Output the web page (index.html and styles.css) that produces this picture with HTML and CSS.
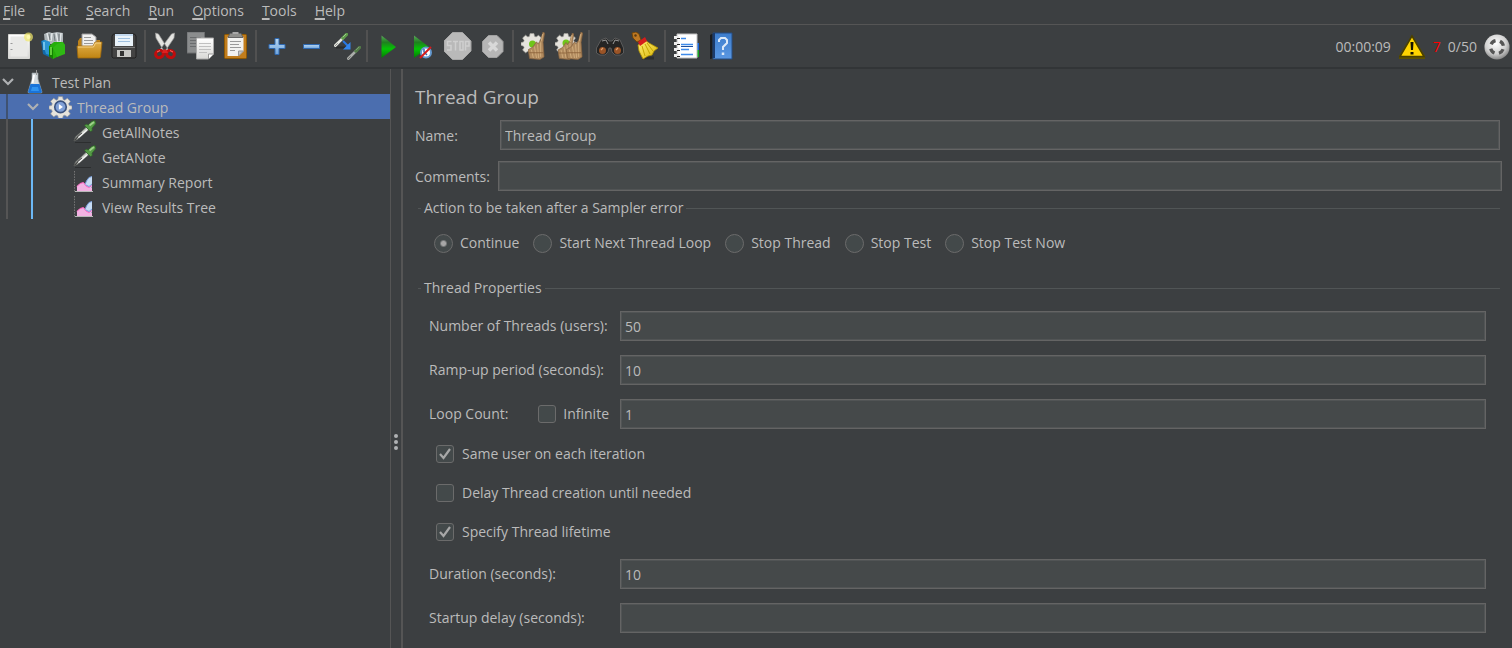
FILE: index.html
```html
<!DOCTYPE html>
<html lang="en">
<head>
<meta charset="utf-8">
<title>Thread Group</title>
<link rel="stylesheet" href="styles.css">
</head>
<body>
<svg class="defs" width="0" height="0" aria-hidden="true">
  <defs>
    <linearGradient id="paper" x1="0" y1="0" x2="0" y2="1"><stop offset="0" stop-color="#fff"/><stop offset="1" stop-color="#d8d8d6"/></linearGradient>
    <linearGradient id="folder" x1="0" y1="0" x2="0" y2="1"><stop offset="0" stop-color="#e2b04a"/><stop offset="1" stop-color="#c08412"/></linearGradient>
    <linearGradient id="green" x1="0" y1="0" x2="0" y2="1"><stop offset="0" stop-color="#5aa85a"/><stop offset=".3" stop-color="#1f7f1f"/><stop offset=".6" stop-color="#04c404"/><stop offset="1" stop-color="#057a05"/></linearGradient>
    <linearGradient id="sky" x1="0" y1="0" x2="0" y2="1"><stop offset="0" stop-color="#b9d8f3"/><stop offset="1" stop-color="#6fa4dc"/></linearGradient>
    <linearGradient id="broom" x1="0" y1="0" x2="1" y2="1"><stop offset="0" stop-color="#fff07a"/><stop offset="1" stop-color="#d9b400"/></linearGradient>
    <linearGradient id="book" x1="0" y1="0" x2="0" y2="1"><stop offset="0" stop-color="#3d7dcc"/><stop offset="1" stop-color="#5a97e2"/></linearGradient>
    <radialGradient id="ball" cx=".45" cy=".35" r=".7"><stop offset="0" stop-color="#fff"/><stop offset=".6" stop-color="#d0d0d0"/><stop offset="1" stop-color="#777"/></radialGradient>
    <symbol id="pipette" viewBox="0 0 24 24">
      <path d="M2 22.500h16" stroke="#2c2e2f" stroke-width="1"/>
      <path d="M1 21l1.500-4L13.500 7l2.500 2.500L5 19z" fill="#c9cdc6" stroke="#666a64" stroke-width=".8"/>
      <path d="M1.500 20.500l3.500-4 4-3.500" stroke="#444" stroke-width="1.200" fill="none"/>
      <path d="M5.500 17.500L14 10" stroke="#f4f4f4" stroke-width="1.300"/>
      <path d="M11.500 5.500l1.800-1.300 2 .8 3.200-3.500 3.500-1 .7 3.200-3.700 4.500.3 2.300-1.800 1z" fill="#549a45" stroke="#2c6426" stroke-width=".7"/>
      <path d="M16.500 5.500L21 2" stroke="#9fd18b" stroke-width="1.800"/>
    </symbol>
    <symbol id="dropper" viewBox="0 0 15 15">
      <path d="M1.500 13.500L9.500 5.500" stroke="#e6e8e2" stroke-width="3" stroke-linecap="round"/>
      <path d="M1 14l3-3" stroke="#8b8d88" stroke-width="1"/>
      <path d="M9.500 5.500l4-4" stroke="#5f9c4b" stroke-width="3.500" stroke-linecap="round"/>
      <path d="M9.500 4.500l3.500-3.500" stroke="#a4cf92" stroke-width="1"/>
    </symbol>
    <symbol id="chart" viewBox="0 0 24 24">
      <path d="M1.500 1v20.500" stroke="#777" stroke-width="1" fill="none" stroke-dasharray="1.500 1.200"/>
      <path d="M2 21.500h18" stroke="#b8b8b8"/>
      <path d="M4 21v-5l3-2.500 3-1 3 2 3 2 3 1v3.500z" fill="#f2b2e2"/>
      <path d="M12 15l1.500-4L16 7.500l3-1V17l-2 1-3-2z" fill="#c6dcf5"/>
      <path d="M4 16.500L7 13.500l3.500-1 2.500 3.500 3 1.500 3-2" stroke="#ff5fc0" fill="none"/>
      <path d="M12 14.500l1.500-3.500L16 7.500l3-1M13 15l3 1.500 3-2.500" stroke="#7a9fdc" fill="none"/>
    </symbol>
    <symbol id="gear" viewBox="0 0 28 28">
      <path d="M11.500 2h5l.7 3.500 2 .8L22.300 4 26 7.700l-2.200 3 .8 2 3.400.8v3.500l-3.400 1-.8 2 2.200 3-3.700 3.500-3-2-2 .9-.8 3.100h-5l-.7-3.100-2-.9-3 2L2 23l2-3-.8-2L0 17v-3.500l3.200-.8.8-2-2-3L5.800 4l3 2.300 2-.8z" fill="#e5e3dd" stroke="#a09e99" stroke-width=".8"/>
    </symbol>
    <symbol id="brush" viewBox="0 0 16 27">
      <path d="M14.300 0l1.500 1-1.500 9 1 14-4 2.500-10-1L0 17l4.500-2.500L8 9.500l1.500 2L12 8z" fill="#b08a5f" stroke="#86633f" stroke-width=".7"/>
      <path d="M3 17l2 8M6 14l2 11M9 12l1 13M12 10v14M14 2l-1.500 7" stroke="#d3ae7e" stroke-width=".9" fill="none"/>
      <path d="M1 20h13.500" stroke="#8a6037" stroke-width=".8"/>
    </symbol>
  </defs>
</svg>

<div class="app">
  <nav class="menubar" aria-label="Main menu">
    <button class="menu"><u>F</u>ile</button>
    <button class="menu"><u>E</u>dit</button>
    <button class="menu"><u>S</u>earch</button>
    <button class="menu"><u>R</u>un</button>
    <button class="menu"><u>O</u>ptions</button>
    <button class="menu"><u>T</u>ools</button>
    <button class="menu"><u>H</u>elp</button>
  </nav>

  <header class="toolbar">
    <div class="group">
      <button class="tool" aria-label="New"><svg width="28" height="28" viewBox="0 0 28 28"><path d="M2.500 2.500h21v24h-21z" fill="url(#paper)" stroke="#d8d8d5"/><path d="M4.500 4.500h17v20h-17z" fill="#e9e9e7"/><path d="M4.500 11.500h2M4.500 17.500h2" stroke="#999"/><circle cx="22.500" cy="5" r="4.500" fill="#f1e86a" opacity=".7"/><circle cx="22.500" cy="5" r="2" fill="#fffbb0"/></svg></button>
      <button class="tool" aria-label="Templates"><svg width="28" height="28" viewBox="0 0 28 28"><path d="M3 2l5-2 3 1 5-1 6 1v11H4z" fill="#aeb5b8"/><path d="M6 1l2 8M11 1l-1 8M15 1l2 9M20 1l-1 9" stroke="#e2e6e8" stroke-width="1.500"/><path d="M8 2l1 6M13 2l1 7M18 2v7" stroke="#70777a"/><path d="M0 9l3-1 5 2v15l-6-3z" fill="#1269a8"/><path d="M1 9l3-1 5 2v13l-4-1z" fill="#2a94d2"/><path d="M3 10v8" stroke="#8ed5f4" stroke-width="1.500"/><path d="M8 14l5-4h8l3 3v8l-12 6-4-3z" fill="#26ae0a"/><path d="M8 14l4 2v11l-4-3z" fill="#148003"/><path d="M12 16l4-4 6-2 2 3v9l-8 3z" fill="#2fb914"/><path d="M10 15v8" stroke="#7ae84c" stroke-width="1.500"/></svg></button>
      <button class="tool" aria-label="Open"><svg width="28" height="28" viewBox="0 0 28 28"><path d="M2 9l2-3h6l2 2h12v18H2z" fill="#be821a"/><path d="M6 2h10l4 3v12H6z" fill="#f0f0f0" stroke="#999"/><path d="M8 5.500h7M8 8.500h9M8 11.500h9" stroke="#999"/><path d="M1 14h16l2-4h7l-1.500 15-1 1H2z" fill="url(#folder)" stroke="#a26b0b" stroke-width=".8"/><path d="M2 15h15.500l2-4h5.500" stroke="#f6d288" fill="none"/></svg></button>
      <button class="tool" aria-label="Save"><svg width="28" height="28" viewBox="0 0 28 28"><path d="M1 4l1.500-2h21L25 4v21l-1 1H2l-1-1z" fill="#434343" stroke="#202020"/><path d="M4 2h18v12H4z" fill="#eaf3fa"/><path d="M4 2h18v2H4z" fill="#c2d8ee"/><path d="M7 6.500h12M7 9.500h12" stroke="#9fc0e0"/><path d="M2 15.500h22" stroke="#777"/><path d="M6 18h14v7H6z" fill="#c8c8c5"/><path d="M9 19h4v5H9z" fill="#333"/></svg></button>
    </div>
    <div class="separator"></div>
    <div class="group">
      <button class="tool" aria-label="Cut"><svg width="28" height="28" viewBox="0 0 28 28"><path d="M3.500 1l3 1 10 16-4 2L4 6zM22.500 1l-3 1L8.500 17l4 3L22 6z" fill="#e4e4e1" stroke="#999" stroke-width=".7"/><g fill="none" stroke="#c00c0c" stroke-width="3"><ellipse cx="7.500" cy="22" rx="4" ry="3.500" transform="rotate(-25 7.500 22)"/><ellipse cx="18.500" cy="22" rx="4" ry="3.500" transform="rotate(25 18.500 22)"/></g><path d="M11 18.500l2-1.500 2 1.500 1 2.500h-6z" fill="#dd2020"/><path d="M5 20l3-1.500M18 18.500l3 1.500" stroke="#ff6a61"/></svg></button>
      <button class="tool" aria-label="Copy"><svg width="28" height="28" viewBox="0 0 28 28"><path d="M0 0h17.500v21H0z" fill="#8b8d8e" stroke="#6c6e70"/><path d="M3 5.500h11M3 8.500h11M3 11.500h7M3 14.500h6" stroke="#6a6c6e"/><path d="M9.500 6h17v16l-5 5h-12z" fill="url(#paper)" stroke="#aaa"/><path d="M12 11.500h12M12 14.500h12M12 17.500h12M12 20.500h8" stroke="#c0c0c0"/><path d="M21.500 27v-5h5" fill="#fff" stroke="#999"/></svg></button>
      <button class="tool" aria-label="Paste"><svg width="28" height="28" viewBox="0 0 28 28"><rect x="2.500" y="2.500" width="22" height="24" rx="1" fill="#c17d1d" stroke="#8f5902"/><path d="M5.500 5h16v14l-5 5h-11z" fill="#f2f2f0"/><path d="M8 1.500h11l2 4H6z" fill="#8f8f8c" stroke="#666"/><path d="M10.500 0h6v2h-6z" fill="#a8a8a8"/><path d="M8 9.500h11M8 12.500h9M8 15.500h11M8 18.500h5" stroke="#999"/><path d="M16.500 24v-5h5z" fill="#c9c9c5" stroke="#999"/></svg></button>
    </div>
    <div class="separator"></div>
    <div class="group">
      <button class="tool" aria-label="Expand all"><svg width="28" height="28" viewBox="0 0 28 28"><path d="M12 6.500h4v6h6v4h-6v6h-4v-6H6v-4h6z" fill="url(#sky)" stroke="#2e68b0"/></svg></button>
      <button class="tool" aria-label="Collapse all"><svg width="28" height="28" viewBox="0 0 28 28"><path d="M5.500 12.500h16v4h-16z" fill="url(#sky)" stroke="#2e68b0"/></svg></button>
      <button class="tool" aria-label="Toggle"><svg width="28" height="28" viewBox="0 0 28 28"><path d="M3 15.500h11" stroke="#2a2c2d" stroke-width="2"/><use href="#dropper" x="1" y="1" width="14" height="14"/><path d="M10 9l5 5" stroke="#2878e4" stroke-width="2"/><path d="M17.500 10v7.500H10z" fill="#3487ee"/><g opacity=".65"><use href="#dropper" x="14" y="14" width="14" height="14"/></g></svg></button>
    </div>
    <div class="separator"></div>
    <div class="group">
      <button class="tool" aria-label="Start"><svg width="28" height="28" viewBox="0 0 28 28"><path d="M7.500 3.500L22 15 7.500 26z" fill="url(#green)"/></svg></button>
      <button class="tool" aria-label="Start no pauses"><svg width="28" height="28" viewBox="0 0 28 28"><path d="M5 3.500L20 15 5 26z" fill="url(#green)"/><circle cx="17" cy="20.500" r="5" fill="#fff" stroke="#6499d0" stroke-width="2"/><path d="M15 17v3l3 3" stroke="#3269b0" stroke-width="1.500" fill="none"/><path d="M11 26l11-11" stroke="#d61b1b" stroke-width="2"/></svg></button>
      <button class="tool" aria-label="Stop"><svg width="28" height="28" viewBox="0 0 28 28"><path d="M8.500 .5h10L27 9v10l-8.500 8.500h-10L0 19V9z" fill="#b9b9b9" stroke="#a6a6a6"/><g stroke="#cfcfcf" fill="none" stroke-width="1.500"><path d="M7.500 9.500H3.500v4h3.500V18H3M9 9.500h5M11.500 9.500v9M16 9.500h3V18h-3zM21.500 18.500v-9H25V14h-3.500"/></g></svg></button>
      <button class="tool" aria-label="Shutdown"><svg width="28" height="28" viewBox="0 0 28 28"><path d="M9.500 3.500h8.500l6 6v10l-6 6H9.500l-6-6v-10z" fill="#b6b6b6" stroke="#a0a0a0"/><path d="M10 10.500l8 8M18 10.500l-8 8" stroke="#d8d8d8" stroke-width="3.500"/></svg></button>
    </div>
    <div class="separator"></div>
    <div class="group">
      <button class="tool" aria-label="Clear"><svg width="28" height="28" viewBox="0 0 28 28"><use href="#gear" x="1" y="0" width="22" height="22"/><circle cx="12.500" cy="12" r="3.500" fill="#70c51b"/><use href="#brush" x="8" y="0" width="17" height="28"/></svg></button>
      <button class="tool" aria-label="Clear all"><svg width="28" height="28" viewBox="0 0 28 28"><use href="#gear" x="0" y="0" width="22" height="22"/><circle cx="11" cy="11" r="3.500" fill="#70c51b"/><use href="#brush" x="3" y="1" width="16" height="27"/><use href="#brush" x="11" y="0" width="17" height="28"/></svg></button>
    </div>
    <div class="separator"></div>
    <div class="group">
      <button class="tool" aria-label="Search"><svg width="28" height="28" viewBox="0 0 28 28"><path d="M5 8l5-2 3 3h3l3-3 5 2 3.500 8v5l-3 2H19l-3-3-1-4h-2l-1 4-3 3H4l-3.500-2v-5z" fill="#242424" stroke="#666" stroke-width=".8"/><path d="M6 9l4-1 2 4M23 9l-4-1-2 4" stroke="#999" fill="none"/><circle cx="6.500" cy="18.500" r="3.500" fill="#9a5427"/><circle cx="21.500" cy="18.500" r="3.500" fill="#9a5427"/><path d="M5 18l2-2M20 18l2-2" stroke="#e0a070" stroke-width="1.200"/></svg></button>
      <button class="tool" aria-label="Reset search"><svg width="28" height="28" viewBox="0 0 28 28"><path d="M11 26h12" stroke="#2c2e2f" stroke-width="3"/><path d="M1 1l4-1 3 2 2 6-4 2-4-4z" fill="#bd7823" stroke="#704200" stroke-width=".8"/><circle cx="4.500" cy="3.500" r="1.200" fill="#593b13"/><path d="M7 13l7-5 4 3 9 5-4 3-2 4-4 1-5 3-4-8z" fill="url(#broom)" stroke="#b09000" stroke-width=".8"/><path d="M14 12l5 10M16 11l6 8M11 14l3 10" stroke="#c3a400"/><path d="M7 10l7-5 2 4-7 5z" fill="#d51c1c"/></svg></button>
    </div>
    <div class="separator"></div>
    <div class="group">
      <button class="tool" aria-label="Function helper"><svg width="28" height="28" viewBox="0 0 28 28"><path d="M22 11h5v7h-5z" fill="#1667df"/><path d="M22 18h5v7h-5z" fill="#16a624"/><path d="M5 2h20v24H5z" fill="#fff" stroke="#c0c0c0"/><path d="M9 6.500h5M9 12.500h12M9 17.500h8M9 22.500h12" stroke="#3f8bea" stroke-width="1.500"/><path d="M9 14.500h12" stroke="#1c4f9e"/><path d="M2 5.500h5M2 11.500h5M2 17.500h5M2 23.500h5" stroke="#eee" stroke-width="3"/><path d="M5 6.500h3M5 12.500h3M5 18.500h3M5 24.500h3" stroke="#222"/></svg></button>
      <button class="tool" aria-label="Help"><svg width="28" height="28" viewBox="0 0 28 28"><path d="M3 3l4-2v25l-4 1z" fill="#1b1c1e"/><path d="M6 1h19v26H6z" fill="url(#book)" stroke="#244c82"/><path d="M7 1v25" stroke="#1c3b6b" stroke-width="2"/><path d="M12 10V8l2-2h4l2 2v3l-4 4v3" fill="none" stroke="#dce9f8" stroke-width="2"/><path d="M16 20.500v2.500" stroke="#dce9f8" stroke-width="2.500"/></svg></button>
    </div>
    <div class="status">
      <span>00:00:09</span>
      <button class="warning" aria-label="Log errors"><svg width="28" height="26" viewBox="0 0 28 26"><path d="M14 1L1 22v3h26v-3z" fill="#5d5100"/><path d="M14 2L2 22.500h24z" fill="#ffd400" stroke="#4a4000" stroke-width="1.500"/><path d="M12.500 8h3l-.5 8h-2zM12.500 18h3v2.500h-3z" fill="#151300"/></svg></button>
      <span class="errors">7</span>
      <span>0/50</span>
      <svg width="26" height="28" viewBox="0 0 28 28"><circle cx="14" cy="14" r="13.500" fill="url(#ball)"/><circle cx="14" cy="14" r="7" fill="none" stroke="#555" stroke-width="3.500" stroke-dasharray="6 5" stroke-dashoffset="-2.500"/></svg>
    </div>
  </header>

  <div class="workspace">
    <aside class="sidebar">
      <ul class="tree" role="tree">
        <li role="treeitem" aria-expanded="true">
          <div class="row root"><svg width="14" height="10" viewBox="0 0 14 10"><path d="M2 2l5 5 5-5" fill="none" stroke="#afb1b3" stroke-width="2.200"/></svg><svg class="flask" width="18" height="24" viewBox="0 0 18 24"><path d="M6 3h6v6l4 13q0 1-1 1H3q-1 0-1-1L6 9z" fill="#d4dade" stroke="#8f989e" stroke-width=".7"/><path d="M4.500 14h9l2.500 8-1 1H3l-1-1z" fill="#1973d9"/><path d="M6 17h6l1 4H5z" fill="#2f93f0"/><path d="M10 0h1v5h-1z" fill="#999"/><path d="M8 5L6.500 13" stroke="#fff" stroke-width="2"/></svg>Test Plan</div>
          <ul class="branch gray" role="group">
            <li role="treeitem" aria-expanded="true" aria-selected="true">
              <div class="row child selected"><svg width="14" height="10" viewBox="0 0 14 10"><path d="M2 2l5 5 5-5" fill="none" stroke="#afb1b3" stroke-width="2.200"/></svg><svg class="cog" width="23" height="23" viewBox="0 0 28 28"><use href="#gear" width="28" height="28"/><circle cx="14" cy="14.500" r="7" fill="#7f9fd6" stroke="#3a527f" stroke-width="2"/><path d="M12 11v7l5-3.500z" fill="#fff"/></svg>Thread Group</div>
              <ul class="branch blue" role="group">
                <li class="row leaf" role="treeitem"><svg width="24" height="24"><use href="#pipette"/></svg>GetAllNotes</li>
                <li class="row leaf" role="treeitem"><svg width="24" height="24"><use href="#pipette"/></svg>GetANote</li>
                <li class="row leaf" role="treeitem"><svg width="24" height="24"><use href="#chart"/></svg>Summary Report</li>
                <li class="row leaf" role="treeitem"><svg width="24" height="24"><use href="#chart"/></svg>View Results Tree</li>
              </ul>
            </li>
          </ul>
        </li>
      </ul>
    </aside>

    <div class="splitter"><svg width="6" height="18" viewBox="0 0 6 18"><g fill="#afb1b3"><circle cx="3" cy="3" r="2"/><circle cx="3" cy="9" r="2"/><circle cx="3" cy="15" r="2"/></g></svg></div>

    <main class="panel">
      <h1 class="title">Thread Group</h1>
      <div class="field name"><label for="name">Name:</label><input class="text" id="name" type="text" value="Thread Group"></div>
      <div class="field comments"><label for="comments">Comments:</label><input class="text" id="comments" type="text"></div>

      <fieldset class="box">
        <legend>Action to be taken after a Sampler error</legend>
        <div class="radios">
          <label class="option"><input type="radio" name="action" checked>Continue</label>
          <label class="option"><input type="radio" name="action">Start Next Thread Loop</label>
          <label class="option"><input type="radio" name="action">Stop Thread</label>
          <label class="option"><input type="radio" name="action">Stop Test</label>
          <label class="option"><input type="radio" name="action">Stop Test Now</label>
        </div>
      </fieldset>

      <fieldset class="box">
        <legend>Thread Properties</legend>
        <div class="props">
          <div class="prop"><label for="threads">Number of Threads (users):</label><input class="text" id="threads" type="text" value="50"></div>
          <div class="prop"><label for="ramp">Ramp-up period (seconds):</label><input class="text" id="ramp" type="text" value="10"></div>
          <div class="prop"><div class="loop"><label for="loops">Loop Count:</label><label class="option"><input type="checkbox">Infinite</label></div><input class="text" id="loops" type="text" value="1"></div>
          <div class="checks">
            <label class="option"><input type="checkbox" checked>Same user on each iteration</label>
            <label class="option"><input type="checkbox">Delay Thread creation until needed</label>
            <label class="option"><input type="checkbox" checked>Specify Thread lifetime</label>
          </div>
          <div class="prop"><label for="duration">Duration (seconds):</label><input class="text" id="duration" type="text" value="10"></div>
          <div class="prop"><label for="delay">Startup delay (seconds):</label><input class="text" id="delay" type="text"></div>
        </div>
      </fieldset>
    </main>
  </div>
</div>
</body>
</html>
```

FILE: styles.css
```css
* { box-sizing: border-box; }

body {
  margin: 0;
  background: #3c3f41;
  color: #bbb;
  font: 14px/20px "Open Sans", "Noto Sans", sans-serif;
}

button, input {
  font: inherit;
  color: inherit;
}

button {
  padding: 0;
  border: 0;
  background: none;
}

svg { display: block; flex: none; }
.defs { position: absolute; }

.app {
  display: flex;
  flex-direction: column;
  min-height: 100vh;
}

.menubar {
  display: flex;
  gap: 18px;
  height: 25px;
  padding: 1px 3px 3px;
  border-bottom: 1px solid #555;
}

.menu u {
  text-decoration-thickness: 2px;
  text-underline-offset: 2px;
}

.toolbar {
  display: flex;
  align-items: center;
  height: 44px;
  padding: 0 2px;
  border-bottom: 2px solid #323537;
}

.group { display: flex; }

.tool {
  display: flex;
  justify-content: center;
  width: 35px;
}

.separator {
  width: 2px;
  height: 32px;
  margin: 0 2px;
  background: #515151;
}

.status {
  display: flex;
  align-items: center;
  gap: 7px;
  margin-left: auto;
  padding-top: 2px;
}

.errors { color: #f00; }

.workspace {
  display: flex;
  flex: 1;
}

.sidebar {
  flex: none;
  width: 391px;
  border-right: 1px solid #555;
}

.tree, .branch {
  margin: 0;
  padding: 0;
  list-style: none;
}

.row {
  display: flex;
  align-items: center;
  height: 25px;
  padding-top: 2px;
  white-space: nowrap;
}

.row svg { margin-top: -2px; }
.root { padding-left: 1px; }
.child { padding-left: 26px; }
.leaf { padding-left: 73px; }
.leaf svg { margin-right: 5px; }
.flask { margin: 0 8px 0 11px; }
.cog { margin: 0 5px 0 9px; }
.gray { background: linear-gradient(#555, #555) 6px 0 / 2px 100% no-repeat; }
.blue { background: linear-gradient(#6cb8f5, #6cb8f5) 31px 0 / 2px 100% no-repeat; }

.selected {
  background: linear-gradient(#3f5272, #3f5272) 6px 0 / 2px 100% no-repeat, #4b6eaf;
}

.splitter {
  display: flex;
  flex: none;
  align-items: center;
  justify-content: center;
  width: 12px;
  padding-top: 166px;
  border-right: 2px solid #555;
}

.panel {
  flex: 1;
  min-width: 0;
  padding: 14px 12px;
}

.title {
  margin: 0 0 9px;
  font-size: 19px;
  font-weight: 400;
  line-height: 28px;
}

.field {
  display: flex;
  align-items: center;
}

.field label { padding-top: 2px; }
.name { margin-bottom: 11px; }
.name label { width: 85px; }
.comments { margin-right: -2px; margin-bottom: 7px; }
.comments label { width: 83px; }

.text {
  flex: 1;
  min-width: 0;
  height: 30px;
  padding: 0 4px;
  border: 1px solid #646464;
  box-shadow: inset 0 0 0 1px #515455;
  background: #45494a;
}

.box {
  margin: 0 0 0 3px;
  padding: 0 0 0 3px;
  border: 0;
  border-top: 1px solid #515556;
}

.box legend { padding: 0 3px; }

.radios {
  display: flex;
  gap: 14px;
  padding: 15px 13px 25px;
}

.option {
  display: flex;
  align-items: center;
  gap: 7px;
}

.option input {
  flex: none;
  width: 18px;
  height: 18px;
  margin: 0;
  border: 1px solid #6b6b6b;
  border-radius: 3px;
  background: #43494a center / 18px no-repeat;
  appearance: none;
}

.option input[type="radio"] {
  width: 19px;
  height: 19px;
  border-radius: 50%;
}

.option input[type="radio"]:checked {
  background-image: radial-gradient(circle, #a7a7a7 2px, transparent 4px);
}

.option input[type="checkbox"]:checked {
  background-image: url("data:image/svg+xml,%3Csvg xmlns='http://www.w3.org/2000/svg' viewBox='0 0 18 18'%3E%3Cpath d='M4 9l3.500 4L14 4' fill='none' stroke='%23a7a7a7' stroke-width='2.200'/%3E%3C/svg%3E");
}

.props {
  display: flex;
  flex-direction: column;
  gap: 14px;
  padding: 13px 14px 0 8px;
}

.prop {
  display: grid;
  grid-template-columns: 191px 1fr;
  align-items: center;
}

.loop {
  display: flex;
  justify-content: space-between;
  padding-right: 11px;
}

.checks {
  display: flex;
  flex-direction: column;
  gap: 19px;
  align-items: flex-start;
  padding: 1px 7px 3px;
}

.checks .option { gap: 8px; }
```
